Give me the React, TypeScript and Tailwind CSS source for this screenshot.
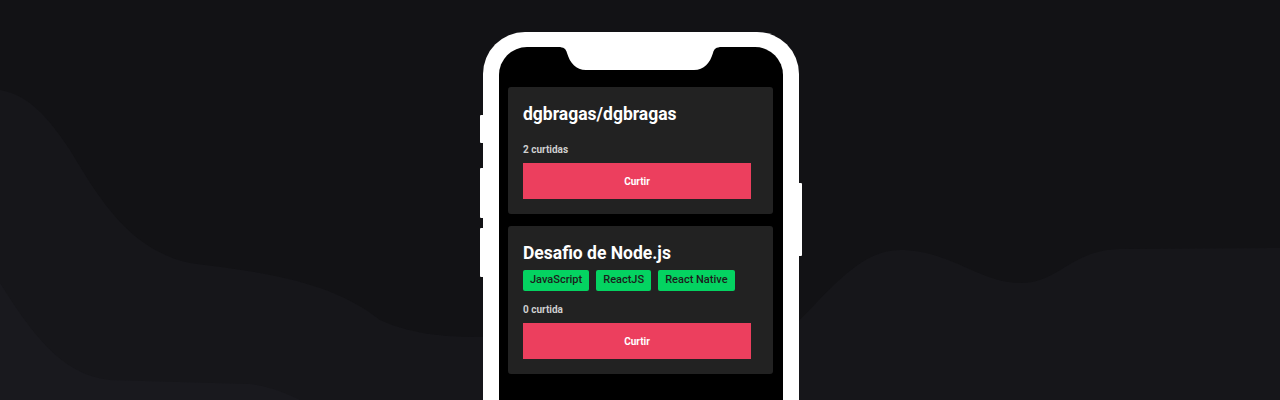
import React from "react";

type Repo = { title: string; techs: string[]; likes: string };

const repos: Repo[] = [
  { title: "dgbragas/dgbragas", techs: [], likes: "2 curtidas" },
  { title: "Desafio de Node.js", techs: ["JavaScript", "ReactJS", "React Native"], likes: "0 curtida" },
];

function Card({ repo }: { repo: Repo }) {
  return (
    <div className="flex w-[265px] flex-col rounded-[3px] bg-[#222222] px-[15px] pt-[17px] pb-[15px]">
      <h2 className="text-[17.5px] leading-[21px] font-bold text-white">{repo.title}</h2>
      <div className="mt-[6px] flex gap-[7px]">
        {repo.techs.map((t) => (
          <span
            key={t}
            className="flex h-[21px] items-center rounded-[2px] bg-[#04d361] px-[7px] text-[11px] font-medium text-[#1c1c1c]"
          >
            {t}
          </span>
        ))}
      </div>
      <p className="mt-[13px] text-[10px] leading-[12px] font-bold text-[#cfcfcf]">{repo.likes}</p>
      <button className="mt-[7px] flex h-[36px] w-[228px] items-center justify-center bg-[#ec3f5e] text-[10px] font-bold text-white">
        Curtir
      </button>
    </div>
  );
}

function Phone({ children }: { children: React.ReactNode }) {
  return (
    <div className="relative h-[420px] w-[316px] rounded-[42px] bg-white px-[16px] pt-[15px]">
      {/* side buttons */}
      <div className="absolute left-[-3px] top-[83px] h-[28px] w-[3px] rounded-l-[1px] bg-white" />
      <div className="absolute left-[-3px] top-[136px] h-[50px] w-[3px] rounded-l-[1px] bg-white" />
      <div className="absolute left-[-3px] top-[196px] h-[49px] w-[3px] rounded-l-[1px] bg-white" />
      <div className="absolute right-[-3px] top-[151px] h-[73px] w-[3px] rounded-r-[1px] bg-white" />

      <div className="relative h-full w-full rounded-t-[28px] bg-black pl-[9px] pt-[40px]">
        <svg className="absolute left-[59px] top-0" width="164" height="23" viewBox="0 0 164 23">
          <path
            d="M0 0 C6 0 8 2 9 6 C12 16 18 23 28 23 L136 23 C146 23 152 16 155 6 C156 2 158 0 164 0 Z"
            fill="#ffffff"
          />
        </svg>
        {children}
      </div>
    </div>
  );
}

export default function App() {
  return (
    <div
      className="relative h-[400px] w-full overflow-hidden bg-[#121215]"
      style={{ fontFamily: "Roboto, 'Liberation Sans', sans-serif" }}
    >
      <svg className="absolute inset-0" width="1280" height="400" viewBox="0 0 1280 400">
        <path
          d="M0 90 C30 95 50 120 70 150 C100 200 130 250 190 263 C260 272 330 280 380 320 C420 338 460 337 500 337 L790 330 C830 290 860 250 900 250 C950 250 980 283 1020 283 C1060 283 1070 250 1120 249 L1280 248 L1280 400 L0 400 Z"
          fill="#16161a"
        />
        <path d="M0 283 C30 330 60 375 110 380 L250 384 C270 386 290 395 300 400 L0 400 Z" fill="#19191e" />
      </svg>

      <div className="relative flex justify-center pl-[2px] pt-[32px]">
        <Phone>
          <div className="flex flex-col gap-[12px]">
            {repos.map((r) => (
              <Card key={r.title} repo={r} />
            ))}
          </div>
        </Phone>
      </div>
    </div>
  );
}
